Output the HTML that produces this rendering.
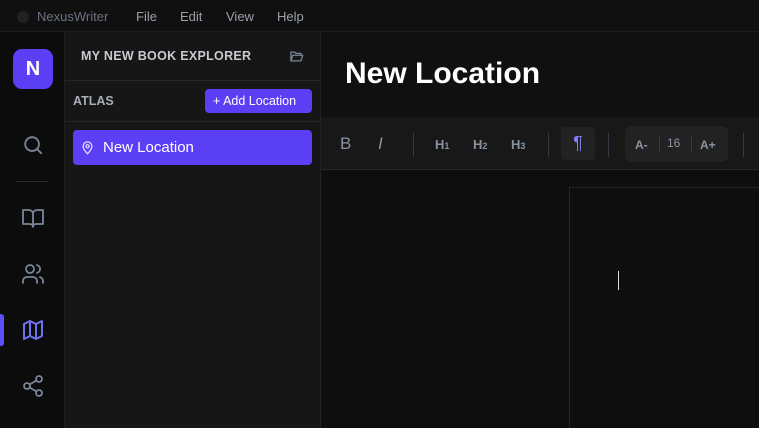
<!DOCTYPE html>
<html><head><meta charset="utf-8"><style>
*{box-sizing:border-box;margin:0;padding:0}
html,body{width:759px;height:428px;overflow:hidden}
body{background:#0e0e0e;font-family:"Liberation Sans",sans-serif;position:relative;color:#ccc}
.abs{position:absolute}
.top{left:0;top:0;width:759px;height:32px;background:#101010;border-bottom:1px solid #1e1e1e;font-size:13px;color:#9aa0aa}
.top span{position:absolute;top:9px}
.side{left:0;top:32px;width:65px;height:396px;background:#0c0c0c;border-right:1px solid #1f1f1f}
.exp{left:65px;top:32px;width:256px;height:396px;background:#161616;border-right:1px solid #222}
.main{left:321px;top:32px;width:438px;height:396px;background:#0e0e0e;overflow:hidden}
svg{position:absolute}
</style></head><body>
<div class="abs top">
<div class="abs" style="left:17px;top:11px;width:12px;height:12px;border-radius:50%;background:#222"></div>
<span style="left:37px;color:#6b7280">NexusWriter</span>
<span style="left:136px">File</span><span style="left:180px">Edit</span><span style="left:226px">View</span><span style="left:277px">Help</span>
</div>
<div class="abs side">
<div class="abs" style="left:13px;top:17px;width:40px;height:40px;border-radius:9px;background:#5b3ff5;color:#fff;font-weight:bold;font-size:20px;text-align:center;line-height:40px">N</div>
<svg style="left:22px;top:102px" width="22" height="22" viewBox="0 0 24 24" fill="none" stroke="#7a8698" stroke-width="2" stroke-linecap="round"><circle cx="11" cy="11" r="7.5"/><path d="M21 21l-4.5-4.5"/></svg>
<div class="abs" style="left:16px;top:149px;width:32px;height:1px;background:#2a2a2a"></div>
<svg style="left:21px;top:174px" width="24" height="24" viewBox="0 0 24 24" fill="none" stroke="#7a8698" stroke-width="1.8" stroke-linejoin="round"><path d="M2 4h6a4 4 0 0 1 4 4v13a3 3 0 0 0-3-3H2zM22 4h-6a4 4 0 0 0-4 4v13a3 3 0 0 1 3-3h7z"/></svg>
<svg style="left:21px;top:230px" width="24" height="24" viewBox="0 0 24 24" fill="none" stroke="#7a8698" stroke-width="1.8" stroke-linecap="round"><circle cx="9" cy="7" r="4"/><path d="M2 21v-2a4 4 0 0 1 4-4h6a4 4 0 0 1 4 4v2M16 3.1a4 4 0 0 1 0 7.8M22 21v-2a4 4 0 0 0-3-3.9"/></svg>
<div class="abs" style="left:0;top:282px;width:4px;height:32px;border-radius:0 3px 3px 0;background:#5b4ff5"></div>
<svg style="left:21px;top:286px" width="24" height="24" viewBox="0 0 24 24" fill="none" stroke="#6f72f0" stroke-width="2" stroke-linejoin="round"><path d="M3 6l6-3 6 3 6-3v15l-6 3-6-3-6 3zM9 3v15M15 6v15"/></svg>
<svg style="left:21px;top:342px" width="24" height="24" viewBox="0 0 24 24" fill="none" stroke="#7a8698" stroke-width="1.8"><circle cx="18" cy="5" r="3"/><circle cx="6" cy="12" r="3"/><circle cx="18" cy="19" r="3"/><path d="M8.6 13.5l6.8 4M15.4 6.5l-6.8 4"/></svg>
</div>
<div class="abs exp">
<div class="abs" style="left:16px;top:17px;font-size:12.5px;font-weight:bold;letter-spacing:0.3px;color:#c8ccd2">MY NEW BOOK EXPLORER</div>
<svg style="left:224px;top:17px" width="15" height="15" viewBox="0 0 24 24" fill="none" stroke="#7a8698" stroke-width="2" stroke-linejoin="round"><path d="M3 19V5h6l2 2h8v3M3 19l3-9h16l-3 9z"/></svg>
<div class="abs" style="left:0;top:48px;width:255px;height:1px;background:#262626"></div>
<div class="abs" style="left:8px;top:62px;font-size:12.5px;font-weight:bold;color:#a8adb6">ATLAS</div>
<div class="abs" style="left:140px;top:57px;width:107px;height:24px;border-radius:4px;background:#5b3ff5;color:#fff;font-size:12.5px;line-height:24px;padding-left:8px">+ Add Location</div>
<div class="abs" style="left:0;top:89px;width:255px;height:1px;background:#262626"></div>
<div class="abs" style="left:8px;top:98px;width:239px;height:35px;border-radius:4px;background:#5b3ff5;color:#fff;font-size:15px;line-height:35px;padding-left:30px">New Location</div>
<svg style="left:15px;top:108px" width="15" height="15" viewBox="0 0 24 24" fill="none" stroke="#e6e2ff" stroke-width="2"><path d="M12 22s7-6.5 7-12a7 7 0 0 0-14 0c0 5.5 7 12 7 12z"/><circle cx="12" cy="10" r="2.5"/></svg>
</div>
<div class="abs main">
<div class="abs" style="left:0;top:0;width:438px;height:85px;background:#101010"></div>
<div class="abs" style="left:24px;top:25px;font-size:30px;font-weight:bold;color:#fff">New Location</div>
<div class="abs" style="left:0;top:85px;width:438px;height:53px;background:#181818;border-bottom:1px solid #262626"></div>
<div class="abs" style="left:19px;top:102px;font-size:17px;color:#8a93a3">B</div>
<div class="abs" style="left:57px;top:102px;font-size:17px;color:#8a93a3;font-style:italic">I</div>
<div class="abs" style="left:92px;top:101px;width:1px;height:24px;background:#333a45"></div>
<div class="abs" style="left:114px;top:105px;font-size:13px;font-weight:bold;color:#8a93a3">H<small style="font-size:9px">1</small></div>
<div class="abs" style="left:152px;top:105px;font-size:13px;font-weight:bold;color:#8a93a3">H<small style="font-size:9px">2</small></div>
<div class="abs" style="left:190px;top:105px;font-size:13px;font-weight:bold;color:#8a93a3">H<small style="font-size:9px">3</small></div>
<div class="abs" style="left:227px;top:101px;width:1px;height:24px;background:#333a45"></div>
<div class="abs" style="left:240px;top:95px;width:34px;height:33px;border-radius:4px;background:#222;color:#7c7ff5;font-size:18px;text-align:center;line-height:33px">¶</div>
<div class="abs" style="left:287px;top:101px;width:1px;height:24px;background:#333a45"></div>
<div class="abs" style="left:304px;top:94px;width:103px;height:36px;border-radius:6px;background:#222"></div>
<div class="abs" style="left:314px;top:106px;font-size:12px;font-weight:bold;color:#8a93a3">A-</div>
<div class="abs" style="left:338px;top:104px;width:1px;height:16px;background:#333a45"></div>
<div class="abs" style="left:346px;top:104px;font-size:12px;color:#8a93a3">16</div>
<div class="abs" style="left:370px;top:104px;width:1px;height:16px;background:#333a45"></div>
<div class="abs" style="left:379px;top:106px;font-size:12px;font-weight:bold;color:#8a93a3">A+</div>
<div class="abs" style="left:422px;top:101px;width:1px;height:24px;background:#333a45"></div>
<div class="abs" style="left:248px;top:155px;width:200px;height:260px;border:1px solid #262626;background:#0e0e0e"></div>
<div class="abs" style="left:297px;top:239px;width:1px;height:19px;background:#ddd"></div>
</div>
</body></html>
